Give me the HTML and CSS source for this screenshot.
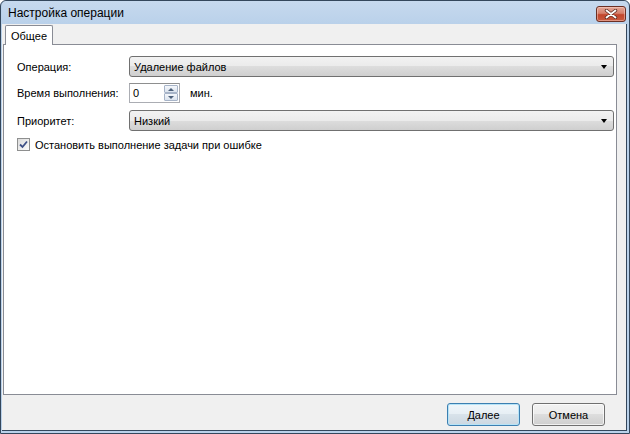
FILE: index.html
```html
<!DOCTYPE html>
<html lang="ru">
<head>
    <meta charset="UTF-8">
    <title>Настройка операции</title>
    <link rel="stylesheet" href="styles.css">
</head>
<body>
    <div class="window">
        <div class="titlebar">
            <span class="title">Настройка операции</span>
            <button class="close-btn" title="Закрыть">
                <svg width="14" height="10" viewBox="0 0 14 10">
                    <path d="M2.5 1.5 L11.5 8.5 M11.5 1.5 L2.5 8.5" stroke="#5b2a20" stroke-width="3.4" stroke-linecap="round"/>
                    <path d="M2.5 1.5 L11.5 8.5 M11.5 1.5 L2.5 8.5" stroke="#ffffff" stroke-width="1.8" stroke-linecap="round"/>
                </svg>
            </button>
        </div>

        <div class="client">
            <div class="tabs">
                <div class="tab active">Общее</div>
            </div>

            <div class="panel">
                <div class="form-row">
                    <label class="field-label">Операция:</label>
                    <div class="combo">
                        <span>Удаление файлов</span>
                        <span class="arrow"></span>
                    </div>
                </div>

                <div class="form-row">
                    <label class="field-label">Время выполнения:</label>
                    <div class="spin">
                        <span class="spin-value">0</span>
                        <div class="spin-buttons">
                            <div class="spin-btn"><span class="up"></span></div>
                            <div class="spin-btn"><span class="down"></span></div>
                        </div>
                    </div>
                    <span class="unit">мин.</span>
                </div>

                <div class="form-row">
                    <label class="field-label">Приоритет:</label>
                    <div class="combo">
                        <span>Низкий</span>
                        <span class="arrow"></span>
                    </div>
                </div>

                <div class="check-row">
                    <span class="checkbox">
                        <svg width="9" height="9" viewBox="0 0 9 9">
                            <path d="M1 4.5 L3.5 7 L8 1.5" fill="none" stroke="#3d4f86" stroke-width="1.8"/>
                        </svg>
                    </span>
                    <span>Остановить выполнение задачи при ошибке</span>
                </div>
            </div>

            <div class="footer">
                <button class="btn default">Далее</button>
                <button class="btn">Отмена</button>
            </div>
        </div>
    </div>
</body>
</html>
```

FILE: styles.css
```css
body {
    margin: 0;
    font-family: "Liberation Sans", Arial, sans-serif;
    font-size: 11px;
    color: #000;
    background: #ffffff;
}

.window {
    width: 630px;
    height: 434px;
    box-sizing: border-box;
    border: 1px solid #34475c;
    border-radius: 6px 6px 0 0;
    background: #b9d1ea;
    padding: 0 1px 2px 1px;
    display: flex;
    flex-direction: column;
}

/* title bar */
.titlebar {
    height: 23px;
    flex-shrink: 0;
    display: flex;
    align-items: center;
    justify-content: space-between;
    background: linear-gradient(#c6d9ee, #bad1ea);
    padding: 0 2px 0 6px;
    border-radius: 5px 5px 0 0;
}
.title {
    font-size: 12px;
    padding-top: 1px;
}
.close-btn {
    width: 30px;
    height: 16px;
    margin-top: 3px;
    padding: 0;
    border: 1px solid #6b2f24;
    border-radius: 3px;
    background: linear-gradient(#e3a797 0%, #d67f6b 45%, #c2452c 55%, #c85a3f 100%);
    box-shadow: inset 0 0 0 1px rgba(255, 220, 210, 0.45);
    display: flex;
    align-items: center;
    justify-content: center;
}

/* client area */
.client {
    flex: 1;
    min-height: 0;
    background: #f0f0f0;
    display: flex;
    flex-direction: column;
    padding: 1px 9px 0 1px;
    border-right: 1px solid #34475c;
    border-bottom: 1px solid #34475c;
    margin-right: 1px;
}

.tabs {
    display: flex;
    flex-shrink: 0;
    padding-left: 2px;
    height: 19px;
    position: relative;
    z-index: 1;
}
.tab {
    box-sizing: border-box;
    width: 48px;
    height: 20px;
    padding: 3px 0 0 5px;
    border: 1px solid #898c95;
    border-bottom: none;
    border-radius: 2px 2px 0 0;
    background: #ffffff;
    line-height: 14px;
}

.panel {
    box-sizing: border-box;
    height: 351px;
    flex-shrink: 0;
    background: #ffffff;
    border: 1px solid #898c95;
    padding: 11px 2px 0 13px;
    display: flex;
    flex-direction: column;
}

.form-row {
    display: flex;
    align-items: center;
    margin-bottom: 6px;
}
.form-row:nth-child(2) {
    margin-bottom: 7px;
}
.field-label {
    width: 112px;
    flex-shrink: 0;
}

.combo {
    flex: 1;
    height: 21px;
    box-sizing: border-box;
    border: 1px solid #707070;
    border-radius: 3px;
    background: linear-gradient(#f2f2f2 0%, #ebebeb 50%, #dddddd 50%, #cfcfcf 100%);
    display: flex;
    align-items: center;
    justify-content: space-between;
    padding: 0 6px 0 4px;
}
.arrow {
    width: 0;
    height: 0;
    border-left: 3.5px solid transparent;
    border-right: 3.5px solid transparent;
    border-top: 4px solid #000;
}

.spin {
    width: 51px;
    height: 20px;
    box-sizing: border-box;
    border: 1px solid #abadb3;
    border-top-color: #8e8f8f;
    background: #fff;
    display: flex;
    align-items: center;
    justify-content: space-between;
    padding: 0 1px 0 3px;
}
.spin-buttons {
    width: 14px;
    height: 16px;
    display: flex;
    flex-direction: column;
}
.spin-btn {
    flex: 1;
    border: 1px solid #a7b4c8;
    border-radius: 1px;
    background: linear-gradient(#f4f7fb, #dbe3ee);
    display: flex;
    align-items: center;
    justify-content: center;
}
.up, .down {
    width: 0;
    height: 0;
    border-left: 3px solid transparent;
    border-right: 3px solid transparent;
}
.up { border-bottom: 3px solid #4c607a; }
.down { border-top: 3px solid #4c607a; }
.unit {
    margin-left: 10px;
}

.check-row {
    display: flex;
    align-items: center;
    gap: 5px;
    margin-top: 1px;
}
.checkbox {
    width: 13px;
    height: 13px;
    box-sizing: border-box;
    border: 1px solid #8e8f8f;
    background: linear-gradient(135deg, #dcdcdc, #fbfbfb);
    display: flex;
    align-items: center;
    justify-content: center;
}

/* dialog buttons */
.footer {
    flex: 1;
    display: flex;
    justify-content: flex-end;
    align-items: flex-start;
    gap: 12px;
    padding: 8px 12px 0 0;
}
.btn {
    width: 73px;
    height: 23px;
    font-family: "Liberation Sans", Arial, sans-serif;
    font-size: 11px;
    border: 1px solid #707070;
    border-radius: 3px;
    background: linear-gradient(#f2f2f2 0%, #ebebeb 50%, #dddddd 50%, #cfcfcf 100%);
    box-shadow: inset 0 0 0 1px rgba(255, 255, 255, 0.7);
    padding: 0;
}
.btn.default {
    border-color: #3c7fb1;
    background: linear-gradient(#f0f6fa 0%, #e6eef4 50%, #d8e2ea 50%, #cbd7e1 100%);
    box-shadow: inset 0 0 0 1px #b6e3f7;
}
```
